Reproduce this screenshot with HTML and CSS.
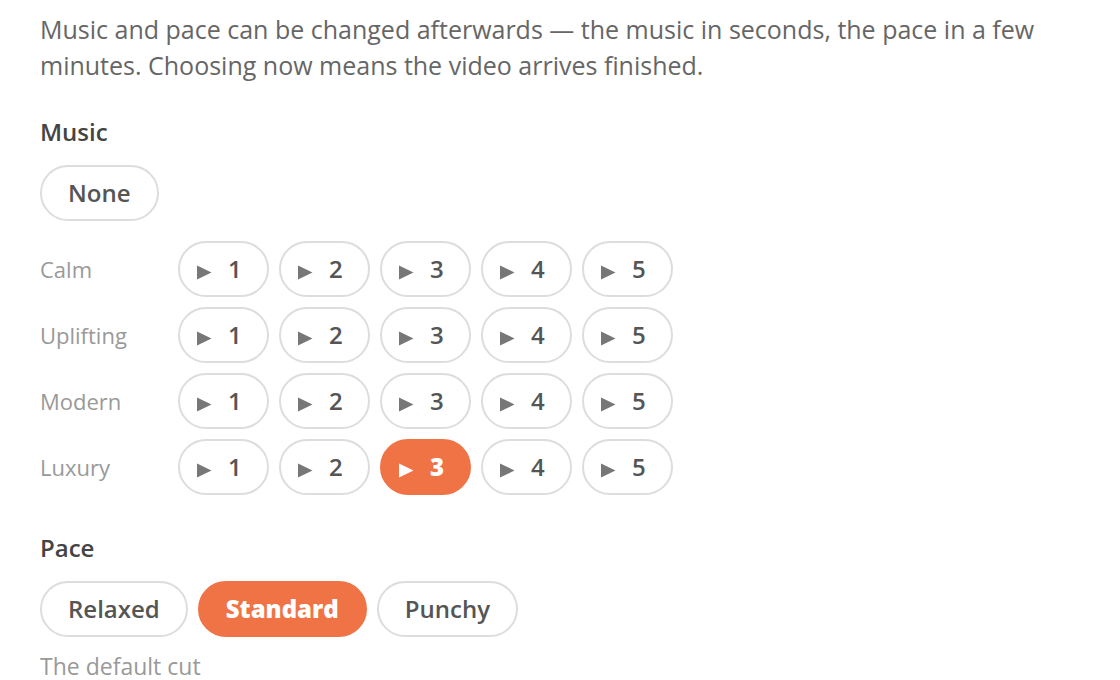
FILE: index.html
```html
<!DOCTYPE html>
<html lang="en">
<head>
<meta charset="utf-8">
<title>Music and pace</title>
<link rel="stylesheet" href="styles.css">
</head>
<body>
<main class="page">
  <p class="intro">Music and pace can be changed afterwards — the music in seconds, the pace in a few minutes. Choosing now means the video arrives finished.</p>

  <h2 class="heading">Music</h2>
  <div class="chips">
    <button class="chip">None</button>
  </div>

  <div class="tracks">
    <div class="track-row">
      <span class="track-label">Calm</span>
      <div class="chips">
        <button class="chip track"><svg class="play" viewBox="0 0 16 15"><path d="M1 0.5 L15.5 7.5 L1 14.5 Z"/></svg>1</button>
        <button class="chip track"><svg class="play" viewBox="0 0 16 15"><path d="M1 0.5 L15.5 7.5 L1 14.5 Z"/></svg>2</button>
        <button class="chip track"><svg class="play" viewBox="0 0 16 15"><path d="M1 0.5 L15.5 7.5 L1 14.5 Z"/></svg>3</button>
        <button class="chip track"><svg class="play" viewBox="0 0 16 15"><path d="M1 0.5 L15.5 7.5 L1 14.5 Z"/></svg>4</button>
        <button class="chip track"><svg class="play" viewBox="0 0 16 15"><path d="M1 0.5 L15.5 7.5 L1 14.5 Z"/></svg>5</button>
      </div>
    </div>
    <div class="track-row">
      <span class="track-label">Uplifting</span>
      <div class="chips">
        <button class="chip track"><svg class="play" viewBox="0 0 16 15"><path d="M1 0.5 L15.5 7.5 L1 14.5 Z"/></svg>1</button>
        <button class="chip track"><svg class="play" viewBox="0 0 16 15"><path d="M1 0.5 L15.5 7.5 L1 14.5 Z"/></svg>2</button>
        <button class="chip track"><svg class="play" viewBox="0 0 16 15"><path d="M1 0.5 L15.5 7.5 L1 14.5 Z"/></svg>3</button>
        <button class="chip track"><svg class="play" viewBox="0 0 16 15"><path d="M1 0.5 L15.5 7.5 L1 14.5 Z"/></svg>4</button>
        <button class="chip track"><svg class="play" viewBox="0 0 16 15"><path d="M1 0.5 L15.5 7.5 L1 14.5 Z"/></svg>5</button>
      </div>
    </div>
    <div class="track-row">
      <span class="track-label">Modern</span>
      <div class="chips">
        <button class="chip track"><svg class="play" viewBox="0 0 16 15"><path d="M1 0.5 L15.5 7.5 L1 14.5 Z"/></svg>1</button>
        <button class="chip track"><svg class="play" viewBox="0 0 16 15"><path d="M1 0.5 L15.5 7.5 L1 14.5 Z"/></svg>2</button>
        <button class="chip track"><svg class="play" viewBox="0 0 16 15"><path d="M1 0.5 L15.5 7.5 L1 14.5 Z"/></svg>3</button>
        <button class="chip track"><svg class="play" viewBox="0 0 16 15"><path d="M1 0.5 L15.5 7.5 L1 14.5 Z"/></svg>4</button>
        <button class="chip track"><svg class="play" viewBox="0 0 16 15"><path d="M1 0.5 L15.5 7.5 L1 14.5 Z"/></svg>5</button>
      </div>
    </div>
    <div class="track-row">
      <span class="track-label">Luxury</span>
      <div class="chips">
        <button class="chip track"><svg class="play" viewBox="0 0 16 15"><path d="M1 0.5 L15.5 7.5 L1 14.5 Z"/></svg>1</button>
        <button class="chip track"><svg class="play" viewBox="0 0 16 15"><path d="M1 0.5 L15.5 7.5 L1 14.5 Z"/></svg>2</button>
        <button class="chip track selected"><svg class="play" viewBox="0 0 16 15"><path d="M1 0.5 L15.5 7.5 L1 14.5 Z"/></svg>3</button>
        <button class="chip track"><svg class="play" viewBox="0 0 16 15"><path d="M1 0.5 L15.5 7.5 L1 14.5 Z"/></svg>4</button>
        <button class="chip track"><svg class="play" viewBox="0 0 16 15"><path d="M1 0.5 L15.5 7.5 L1 14.5 Z"/></svg>5</button>
      </div>
    </div>
  </div>

  <h2 class="heading pace-heading">Pace</h2>
  <div class="chips">
    <button class="chip">Relaxed</button>
    <button class="chip selected">Standard</button>
    <button class="chip">Punchy</button>
  </div>
  <p class="hint">The default cut</p>
</main>
</body>
</html>
```

FILE: styles.css
```css
* { box-sizing: border-box; }

html, body {
  margin: 0;
  padding: 0;
  background: #ffffff;
}

body {
  font-family: "Open Sans", "Liberation Sans", sans-serif;
  color: #555555;
}

.page {
  padding: 11px 40px 0 40px;
}

.intro {
  margin: 0;
  font-size: 25px;
  line-height: 36px;
  color: #666666;
  max-width: 1020px;
}

.heading {
  margin: 32px 0 17px 0;
  font-size: 24px;
  line-height: 33px;
  font-weight: 600;
  color: #444444;
}

.pace-heading {
  margin-top: 36px;
}

.chips {
  display: flex;
  gap: 10px;
}

.chip {
  display: inline-flex;
  align-items: center;
  justify-content: center;
  height: 56px;
  padding: 0 26px 2px 26px;
  border: 2px solid #dddddd;
  border-radius: 28px;
  background: #ffffff;
  font-family: inherit;
  font-size: 24px;
  font-weight: 600;
  color: #555555;
  cursor: pointer;
}

.chip.selected {
  background: #f07346;
  border-color: #f07346;
  color: #ffffff;
  font-weight: 800;
}

.tracks {
  margin-top: 20px;
  display: flex;
  flex-direction: column;
  gap: 10px;
}

.track-row {
  display: flex;
  align-items: center;
}

.track-label {
  width: 138px;
  font-size: 22px;
  color: #999999;
  padding-bottom: 1px;
}

.chip.track {
  width: 91px;
  padding: 0 0 2px 16px;
  justify-content: flex-start;
}

.play {
  width: 16px;
  height: 15px;
  margin-right: 16px;
  fill: #777777;
  position: relative;
  top: 4px;
}

.chip.selected .play {
  fill: #ffffff;
}

.hint {
  margin: 13px 0 0 0;
  font-size: 23px;
  line-height: 33px;
  color: #999999;
}
```
